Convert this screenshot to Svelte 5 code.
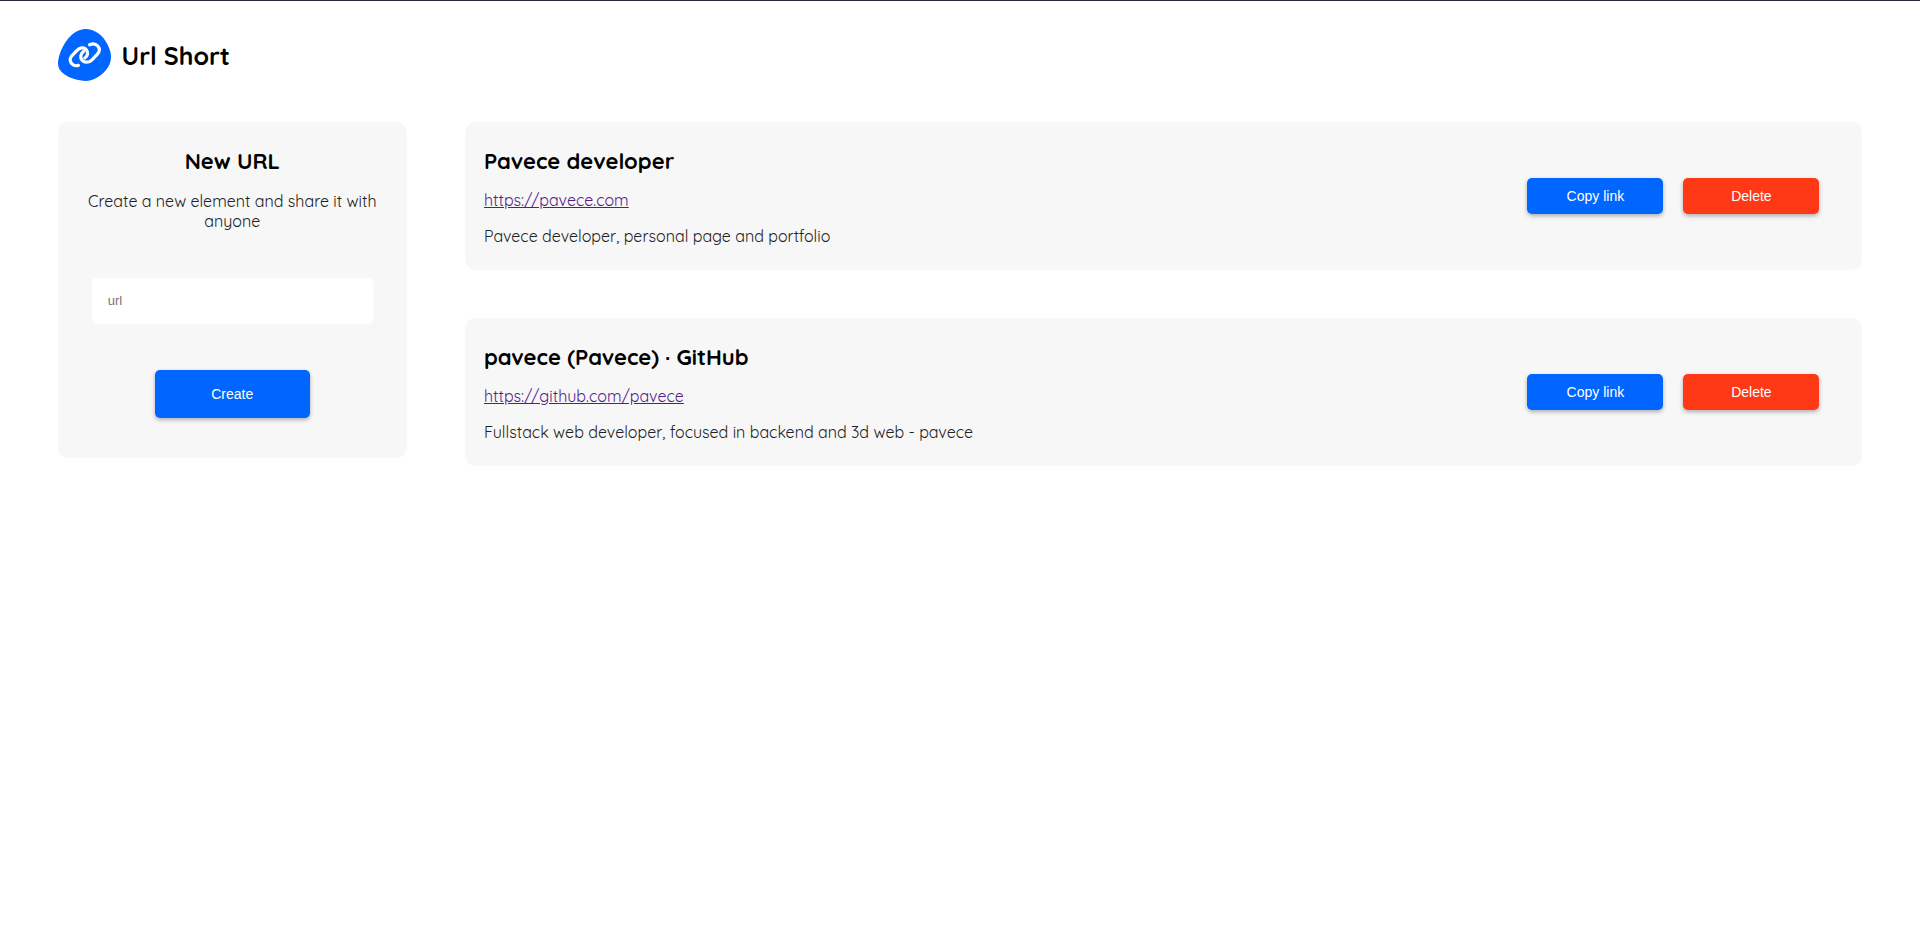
<script lang="ts">
    interface ShortUrl {
        title: string;
        url: string;
        description: string;
    }

    let newUrl = $state('');

    let urls: ShortUrl[] = $state([
        {
            title: 'Pavece developer',
            url: 'https://pavece.com',
            description: 'Pavece developer, personal page and portfolio'
        },
        {
            title: 'pavece (Pavece) · GitHub',
            url: 'https://github.com/pavece',
            description: 'Fullstack web developer, focused in backend and 3d web - pavece'
        }
    ]);

    function createUrl(event: SubmitEvent) {
        event.preventDefault();
        if (!newUrl) return;

        urls.push({ title: newUrl, url: newUrl, description: '' });
        newUrl = '';
    }

    function copyLink(url: string) {
        navigator.clipboard.writeText(url);
    }

    function deleteUrl(index: number) {
        urls.splice(index, 1);
    }
</script>

<div class="page">
    <header>
        <svg class="logo" viewBox="0 0 53 52" aria-hidden="true">
            <path
                fill="#0066ff"
                d="M27.7 0C35 0 42 4.5 46.5 10.5C50 15.5 53 22 53 28C53 35 49 41 43.5 45.5C38.5 49.5 33 52 28 52C20 51.5 12 49.5 6 45C2 42 0 39 0 34.5C0 28 3 20 8 12.5C13 5 20 0 27.7 0Z"
            />
            <g fill="none" stroke="#fff" stroke-width="3.2" stroke-linecap="round">
                <path d="M20.4 36.4C16.6 37.6 12.8 35.4 12.2 31.6C12 29.6 12.6 28.2 13.8 26.8L18.8 21.6C21.6 18.4 26 17.8 28.2 20.6C30.4 23.2 30 27 26.8 29" />
                <path d="M25.6 22.4C22.4 24.6 21.8 28.6 24.2 31.4C26.6 34 31 33.8 34 30.8L39.2 25.4C41.6 22.8 42 19.6 39.8 17C37.6 14.6 34.6 14.4 31.6 15.8" />
            </g>
        </svg>
        <h1>Url Short</h1>
    </header>

    <main>
        <form class="card new-url" onsubmit={createUrl}>
            <h2>New URL</h2>
            <p>Create a new element and share it with anyone</p>
            <input type="text" placeholder="url" aria-label="url" bind:value={newUrl} />
            <button type="submit" class="create">Create</button>
        </form>

        <section class="list">
            {#each urls as item, i}
                <article class="card item">
                    <div class="info">
                        <h2>{item.title}</h2>
                        <a href={item.url}>{item.url}</a>
                        <p>{item.description}</p>
                    </div>
                    <div class="actions">
                        <button type="button" onclick={() => copyLink(item.url)}>Copy link</button>
                        <button type="button" class="delete" onclick={() => deleteUrl(i)}>Delete</button>
                    </div>
                </article>
            {/each}
        </section>
    </main>
</div>

<style>
    :global(body) {
        background-color: #fff;
    }

    .page {
        border-top: 1px solid #2b2a3b;
        padding: 28px 3%;
        color: #000;
        font-family: Quicksand, Lato, sans-serif;
        font-size: 16px;
        font-weight: 400;
        line-height: 20px;
    }

    header {
        display: flex;
        align-items: center;
        gap: 11px;
        margin-bottom: 41px;
    }

    .logo {
        width: 53px;
        height: 52px;
    }

    h1,
    h2,
    p {
        margin: 0;
    }

    h1 {
        padding-top: 2px;
        font-size: 25px;
        line-height: 32px;
        font-weight: 700;
    }

    h2 {
        font-size: 22px;
        line-height: 25px;
        font-weight: 700;
    }

    p {
        color: #222;
    }

    main {
        display: grid;
        grid-template-columns: 1fr 4fr;
        gap: 58px;
        align-items: start;
    }

    .card {
        background-color: #f7f7f7;
        border-radius: 10px;
    }

    .new-url {
        display: flex;
        flex-direction: column;
        align-items: center;
        padding: 27px 24px 40px;
        text-align: center;
    }

    .new-url p {
        margin-top: 17px;
    }

    input {
        box-sizing: border-box;
        width: 281px;
        max-width: 100%;
        height: 46px;
        margin: 47px 0 46px;
        padding: 0 16px 2px;
        border: 0;
        border-radius: 5px;
        background-color: #fff;
        font-family: 'Liberation Sans', Arial, sans-serif;
        font-size: 13px;
    }

    button {
        width: 136px;
        height: 36px;
        padding: 0;
        border: 0;
        border-radius: 5px;
        background-color: #0066ff;
        box-shadow: 0 2px 4px rgba(0, 0, 0, 0.3);
        color: #fff;
        font-family: 'Liberation Sans', Arial, sans-serif;
        font-size: 14px;
        cursor: pointer;
    }

    .create {
        width: 155px;
        height: 48px;
    }

    .delete {
        background-color: #ff3815;
    }

    .list {
        display: flex;
        flex-direction: column;
        gap: 48px;
    }

    .item {
        display: flex;
        align-items: center;
        justify-content: space-between;
        padding: 0 43px 0 19px;
    }

    .info {
        display: flex;
        flex-direction: column;
        align-items: flex-start;
        gap: 16px;
        padding: 27px 0 24px;
    }

    a {
        color: #551a8b;
    }

    .actions {
        display: flex;
        gap: 20px;
    }
</style>
